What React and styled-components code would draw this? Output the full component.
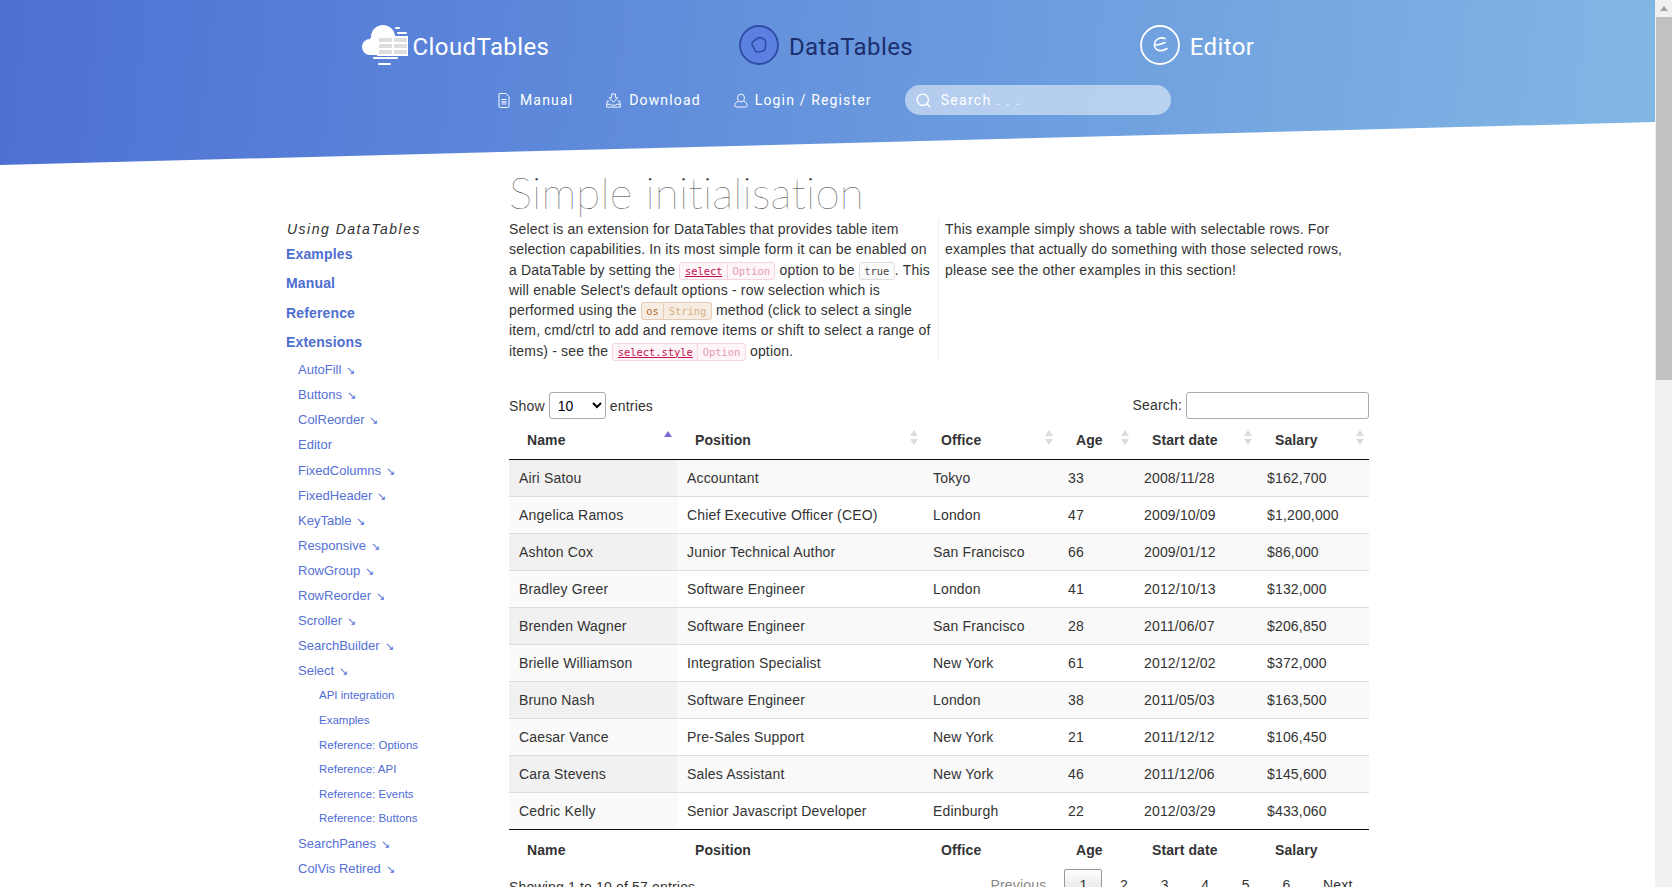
import React from "react";
import styled, { createGlobalStyle } from "styled-components";
import { Search } from "lucide-react";

const GlobalStyle = createGlobalStyle`
  html, body {
    margin: 0;
    height: 100%;
    overflow: hidden;
    background: #fff;
  }
  body {
    font-family: "Liberation Sans", Arial, sans-serif;
    font-size: 14px;
    color: #333;
  }
`;

const subItems = [
  { name: "AutoFill", arrow: true },
  { name: "Buttons", arrow: true },
  { name: "ColReorder", arrow: true },
  { name: "Editor" },
  { name: "FixedColumns", arrow: true },
  { name: "FixedHeader", arrow: true },
  { name: "KeyTable", arrow: true },
  { name: "Responsive", arrow: true },
  { name: "RowGroup", arrow: true },
  { name: "RowReorder", arrow: true },
  { name: "Scroller", arrow: true },
  { name: "SearchBuilder", arrow: true },
  { name: "Select", arrow: true },
];

const selectItems = [
  "API integration",
  "Examples",
  "Reference: Options",
  "Reference: API",
  "Reference: Events",
  "Reference: Buttons",
];

const columns = ["Name", "Position", "Office", "Age", "Start date", "Salary"];
const widths = [168, 246, 135, 76, 123, 112];

const rows = [
  ["Airi Satou", "Accountant", "Tokyo", "33", "2008/11/28", "$162,700"],
  ["Angelica Ramos", "Chief Executive Officer (CEO)", "London", "47", "2009/10/09", "$1,200,000"],
  ["Ashton Cox", "Junior Technical Author", "San Francisco", "66", "2009/01/12", "$86,000"],
  ["Bradley Greer", "Software Engineer", "London", "41", "2012/10/13", "$132,000"],
  ["Brenden Wagner", "Software Engineer", "San Francisco", "28", "2011/06/07", "$206,850"],
  ["Brielle Williamson", "Integration Specialist", "New York", "61", "2012/12/02", "$372,000"],
  ["Bruno Nash", "Software Engineer", "London", "38", "2011/05/03", "$163,500"],
  ["Caesar Vance", "Pre-Sales Support", "New York", "21", "2011/12/12", "$106,450"],
  ["Cara Stevens", "Sales Assistant", "New York", "46", "2011/12/06", "$145,600"],
  ["Cedric Kelly", "Senior Javascript Developer", "Edinburgh", "22", "2012/03/29", "$433,060"],
];

const tones = {
  pink: { bg: "#fdf5f8", line: "#f6d5e0", main: "#c4104f", sub: "#e79ab5" },
  brown: { bg: "#f6ece2", line: "#e3cdb6", main: "#b9691e", sub: "#d9ae84" },
  plain: { bg: "#fbfbfb", line: "#dedede", main: "#444", sub: "#999" },
};

const CloudLogo = () => (
  <svg width="47" height="44" viewBox="0 -1 47 44">
    <g fill="#fff">
      <circle cx="9" cy="23" r="8" />
      <circle cx="22" cy="13" r="12" />
      <rect x="9" y="14" width="20" height="17" />
      <rect x="16" y="12" width="31" height="20" />
      <rect x="34" y="3" width="5" height="2" rx="1" />
      <rect x="36" y="8" width="10" height="2" rx="1" />
      <rect x="12" y="33" width="25" height="2" rx="1" />
      <rect x="17" y="39" width="13" height="2" rx="1" />
    </g>
    <g fill="#dedede">
      <rect x="18" y="14" width="13" height="4" />
      <rect x="33" y="14" width="13" height="4" />
      <rect x="18" y="20" width="13" height="4" />
      <rect x="33" y="20" width="13" height="4" />
      <rect x="18" y="26" width="13" height="4" />
      <rect x="33" y="26" width="13" height="4" />
    </g>
  </svg>
);

const DataLogo = () => (
  <svg width="40" height="40" viewBox="0 0 40 40">
    <circle cx="20" cy="20" r="19" fill="#5b80e2" stroke="#2f4ba3" strokeWidth="1.8" />
    <path
      d="M13.5 17 L19 13 Q21 12.2 23 13 L26 15 Q27 16 26.8 18 L26 24 Q25.6 26 23.5 26.3 L18.5 27 Q16.5 27 16 25.4 L13.2 19.5 Q12.6 18 13.5 17 Z"
      fill="none"
      stroke="#2f4ba3"
      strokeWidth="1.6"
    />
  </svg>
);

const EditorLogo = () => (
  <svg width="40" height="40" viewBox="0 0 40 40" fill="none" stroke="#fff">
    <circle cx="20" cy="20" r="19" strokeWidth="1.8" />
    <path
      d="M25 13.5 C20 11.5 14 15 14.5 20.5 C15 25.5 21 27.5 27 23.5 M15 20.3 C18 20 21 19.3 25 17.5"
      strokeWidth="1.6"
      strokeLinecap="round"
    />
  </svg>
);

const ManualIcon = () => (
  <svg width="12" height="15" viewBox="0 0 12 15" fill="none" stroke="#fff" strokeWidth="1">
    <path d="M1.5 0.5 H8 L11 3.5 V13 Q11 14.5 9.5 14.5 H2.5 Q1 14.5 1 13 V1 Z" />
    <path d="M3.5 6.5 H8.5 M3.5 8.8 H8.5 M3.5 11 H8.5" strokeWidth="1.2" />
  </svg>
);

const DownloadIcon = () => (
  <svg width="15" height="15" viewBox="0 0 16 15" fill="none" stroke="#fff" strokeWidth="1">
    <path d="M6 0.5 H10 V4.5 H12.5 L8 9.5 L3.5 4.5 H6 Z" />
    <path d="M3.5 8 H1.5 L0.7 12 V14.5 H15.3 V12 L14.5 8 H12.5 M0.7 11.5 H5 L6 12.5 H10 L11 11.5 H15.3" />
  </svg>
);

const UserIcon = () => (
  <svg width="14" height="15" viewBox="0 0 15 15" fill="none" stroke="#fff" strokeWidth="1">
    <ellipse cx="7.5" cy="4.8" rx="3.8" ry="4.2" />
    <path d="M4.5 8.5 C2.5 9.2 0.8 10.5 0.8 12.5 Q0.8 14.5 2.8 14.5 H12.2 Q14.2 14.5 14.2 12.5 C14.2 10.5 12.5 9.2 10.5 8.5" />
  </svg>
);

const App = () => {
  return (
    <Wrapper>
      <GlobalStyle />
      <Page>
        <Header>
          <Brands>
            <Brand>
              <CloudLogo />
              <BrandName $gap="5px">CloudTables</BrandName>
            </Brand>
            <Brand>
              <DataLogo />
              <BrandName $dark>DataTables</BrandName>
            </Brand>
            <Brand>
              <EditorLogo />
              <BrandName>Editor</BrandName>
            </Brand>
          </Brands>
          <Nav>
            <NavLink $gap="10px">
              <ManualIcon />
              <span>Manual</span>
            </NavLink>
            <NavLink $gap="8px">
              <DownloadIcon />
              <span>Download</span>
            </NavLink>
            <NavLink $gap="7px">
              <UserIcon />
              <span>Login / Register</span>
            </NavLink>
            <SearchBox>
              <Search size={17} color="#fff" strokeWidth={2} />
              <SearchInput placeholder="Search . . ." />
            </SearchBox>
          </Nav>
        </Header>

        <Body>
          <Sidebar>
            <SideTitle>Using DataTables</SideTitle>
            <TopLink>Examples</TopLink>
            <TopLink>Manual</TopLink>
            <TopLink>Reference</TopLink>
            <TopLink>Extensions</TopLink>
            {subItems.map((item) => (
              <SubLink key={item.name}>
                {item.name}
                {item.arrow && <Arrow>↘</Arrow>}
              </SubLink>
            ))}
            {selectItems.map((item) => (
              <DeepLink key={item}>{item}</DeepLink>
            ))}
            <SubLink>
              SearchPanes<Arrow>↘</Arrow>
            </SubLink>
            <SubLink>
              ColVis Retired<Arrow>↘</Arrow>
            </SubLink>
          </Sidebar>

          <Main>
            <Title>Simple initialisation</Title>
            <Intro>
              <IntroLeft>
                Select is an extension for DataTables that provides table item
                selection capabilities. In its most simple form it can be enabled on
                a DataTable by setting the{" "}
                <Tag $tone="pink">
                  <TagMain $tone="pink" $link>select</TagMain>
                  <TagSub $tone="pink">Option</TagSub>
                </Tag>{" "}
                option to be{" "}
                <Tag $tone="plain">
                  <TagSub $tone="plain" $solo>true</TagSub>
                </Tag>
                . This will enable Select's default options - row selection which is
                performed using the{" "}
                <Tag $tone="brown">
                  <TagMain $tone="brown">os</TagMain>
                  <TagSub $tone="brown">String</TagSub>
                </Tag>{" "}
                method (click to select a single item, cmd/ctrl to add and remove
                items or shift to select a range of items) - see the{" "}
                <Tag $tone="pink">
                  <TagMain $tone="pink" $link>select.style</TagMain>
                  <TagSub $tone="pink">Option</TagSub>
                </Tag>{" "}
                option.
              </IntroLeft>
              <IntroRight>
                This example simply shows a table with selectable rows. For
                <br />
                examples that actually do something with those selected rows,
                <br />
                please see the other examples in this section!
              </IntroRight>
            </Intro>

            <Controls>
              <label>
                Show{" "}
                <LengthSelect defaultValue="10">
                  <option>10</option>
                  <option>25</option>
                  <option>50</option>
                  <option>100</option>
                </LengthSelect>{" "}
                entries
              </label>
              <label>
                Search: <FilterInput />
              </label>
            </Controls>

            <Table>
              <colgroup>
                {widths.map((w, i) => (
                  <col key={i} style={{ width: w }} />
                ))}
              </colgroup>
              <thead>
                <tr>
                  {columns.map((c, i) => (
                    <HeadCell key={c}>
                      {c}
                      {i === 0 ? <SortUp $active /> : <><SortUp /><SortDown /></>}
                    </HeadCell>
                  ))}
                </tr>
              </thead>
              <tbody>
                {rows.map((row) => (
                  <Row key={row[0]}>
                    {row.map((cell, i) => (
                      <Cell key={i} $sorted={i === 0}>
                        {cell}
                      </Cell>
                    ))}
                  </Row>
                ))}
              </tbody>
              <tfoot>
                <tr>
                  {columns.map((c) => (
                    <FootCell key={c}>{c}</FootCell>
                  ))}
                </tr>
              </tfoot>
            </Table>

            <TableFooter>
              <Info>Showing 1 to 10 of 57 entries</Info>
              <Pagination>
                <PageButton $disabled>Previous</PageButton>
                <PageButton $current>1</PageButton>
                <PageButton>2</PageButton>
                <PageButton>3</PageButton>
                <PageButton>4</PageButton>
                <PageButton>5</PageButton>
                <PageButton>6</PageButton>
                <PageButton>Next</PageButton>
              </Pagination>
            </TableFooter>
          </Main>
        </Body>
      </Page>

      <Scrollbar>
        <ScrollUp />
        <ScrollThumb />
      </Scrollbar>
    </Wrapper>
  );
};

const Wrapper = styled.div`
  display: flex;
  width: 1672px;
  height: 887px;
  overflow: hidden;
`;

const Page = styled.div`
  width: 1655px;
  flex: none;
`;

const Header = styled.header`
  height: 165px;
  box-sizing: border-box;
  padding: 25px 3px 0 0;
  background: linear-gradient(178.5deg, transparent 80%, rgba(50, 90, 150, 0.22) 92%),
    linear-gradient(96deg, #4e70d3 0%, #6391dc 45%, #82b7e4 100%);
  clip-path: polygon(0 0, 100% 0, 100% 122px, 0 165px);
  font-family: Roboto, sans-serif;
`;

const Brands = styled.div`
  display: grid;
  grid-template-columns: repeat(3, 371px);
  justify-content: center;
`;

const Brand = styled.div`
  display: flex;
  align-items: center;
  justify-content: center;
  height: 40px;
`;

const BrandName = styled.span`
  margin-left: ${(p) => p.$gap || "10px"};
  padding-top: 4px;
  font-size: 24px;
  letter-spacing: 0.4px;
  color: ${(p) => (p.$dark ? "#1c2f6e" : "#fff")};
`;

const Nav = styled.nav`
  display: flex;
  align-items: center;
  margin: 20px 0 0 498px;
`;

const NavLink = styled.a`
  display: flex;
  align-items: center;
  gap: ${(p) => p.$gap};
  margin-right: 33px;
  color: #fff;
  font-size: 14px;
  letter-spacing: 1.15px;
`;

const SearchBox = styled.div`
  display: flex;
  align-items: center;
  gap: 9px;
  width: 266px;
  height: 30px;
  box-sizing: border-box;
  padding-left: 10px;
  border-radius: 15px;
  background: rgba(255, 255, 255, 0.5);
`;

const SearchInput = styled.input`
  flex: 1;
  min-width: 0;
  padding: 0;
  border: 0;
  outline: 0;
  background: transparent;
  color: #fff;
  font-family: Roboto, sans-serif;
  font-size: 14px;
  letter-spacing: 1.3px;
  &::placeholder {
    color: #fff;
    opacity: 1;
  }
`;

const Body = styled.div`
  display: flex;
  padding-left: 286px;
`;

const Sidebar = styled.aside`
  width: 223px;
  flex: none;
  padding-top: 55px;
`;

const SideTitle = styled.div`
  margin-bottom: 2px;
  padding-left: 1px;
  font-style: italic;
  letter-spacing: 1.5px;
  line-height: 18px;
  color: #333;
`;

const TopLink = styled.a`
  display: block;
  height: 29.3px;
  line-height: 29.3px;
  font-weight: bold;
  letter-spacing: 0.15px;
  color: #4e6ed0;
`;

const SubLink = styled.a`
  display: block;
  height: 25.1px;
  line-height: 25.1px;
  padding-left: 12px;
  font-size: 13px;
  color: #5570d6;
`;

const DeepLink = styled.a`
  display: block;
  height: 24.6px;
  line-height: 24.6px;
  padding-left: 33px;
  font-size: 11.5px;
  color: #4f6cd6;
`;

const Arrow = styled.span`
  margin-left: 5px;
  font-size: 11px;
`;

const Main = styled.main`
  width: 860px;
  flex: none;
  letter-spacing: 0.17px;
`;

const Title = styled.h1`
  margin: 0;
  height: 54px;
  line-height: 54px;
  font-family: Lato, sans-serif;
  font-weight: 100;
  font-size: 44px;
  letter-spacing: 0.2px;
  color: #333;
`;

const Intro = styled.div`
  display: grid;
  grid-template-columns: 430px 430px;
  line-height: 20.3px;
`;

const IntroLeft = styled.p`
  margin: 0;
  padding-right: 5px;
  border-right: 1px solid #eee;
`;

const IntroRight = styled.p`
  margin: 0;
  padding-left: 6px;
`;

const Tag = styled.code`
  padding: 2px 0;
  border: 1px solid ${(p) => tones[p.$tone].line};
  border-radius: 3px;
  background: ${(p) => tones[p.$tone].bg};
  font-family: "DejaVu Sans Mono", monospace;
  font-size: 10.4px;
  line-height: 1;
  letter-spacing: 0;
`;

const TagMain = styled.span`
  padding: 2px 4.5px;
  border-right: 1px solid ${(p) => tones[p.$tone].line};
  color: ${(p) => tones[p.$tone].main};
  text-decoration: ${(p) => (p.$link ? "underline" : "none")};
`;

const TagSub = styled.span`
  padding: 2px 4.5px;
  color: ${(p) => (p.$solo ? tones[p.$tone].main : tones[p.$tone].sub)};
`;

const Controls = styled.div`
  display: flex;
  align-items: center;
  justify-content: space-between;
  height: 27px;
  margin-top: 31px;
`;

const LengthSelect = styled.select`
  width: 57px;
  height: 27px;
  padding: 0 4px;
  border: 1px solid #aaa;
  border-radius: 3px;
  background: #fff;
  font-family: "Liberation Sans", Arial, sans-serif;
  font-size: 14px;
  color: #000;
`;

const FilterInput = styled.input`
  width: 183px;
  height: 27px;
  box-sizing: border-box;
  border: 1px solid #aaa;
  border-radius: 3px;
`;

const Table = styled.table`
  width: 860px;
  margin-top: 3px;
  table-layout: fixed;
  border-collapse: separate;
  border-spacing: 0;
`;

const HeadCell = styled.th`
  position: relative;
  height: 38px;
  box-sizing: border-box;
  padding: 0 18px 1px;
  border-bottom: 1px solid #111;
  text-align: left;
  font-weight: bold;
  line-height: 18px;
  letter-spacing: 0.1px;
`;

const SortUp = styled.span`
  position: absolute;
  right: 5px;
  top: ${(p) => (p.$active ? "9px" : "8px")};
  border-left: 4px solid transparent;
  border-right: 4px solid transparent;
  border-bottom: 6px solid ${(p) => (p.$active ? "#7b6cd8" : "#dcdcdc")};
`;

const SortDown = styled.span`
  position: absolute;
  right: 5px;
  top: 17px;
  border-left: 4px solid transparent;
  border-right: 4px solid transparent;
  border-top: 6px solid #dcdcdc;
`;

const Cell = styled.td`
  height: 37px;
  box-sizing: border-box;
  padding: 0 10px;
  border-bottom: 1px solid #ddd;
  white-space: nowrap;
`;

const Row = styled.tr`
  &:nth-child(odd) ${Cell} {
    background: #f9f9f9;
  }
  &:nth-child(odd) ${Cell}:first-child {
    background: #f1f1f1;
  }
  &:nth-child(even) ${Cell}:first-child {
    background: #fafafa;
  }
  &:last-child ${Cell} {
    border-bottom: 0;
    height: 36px;
  }
`;

const FootCell = styled.th`
  height: 40px;
  box-sizing: border-box;
  padding: 0 18px;
  border-top: 1px solid #111;
  text-align: left;
  font-weight: bold;
  letter-spacing: 0.1px;
`;

const TableFooter = styled.div`
  display: flex;
  justify-content: space-between;
`;

const Info = styled.div`
  padding-top: 8px;
  line-height: 20px;
`;

const Pagination = styled.div`
  display: flex;
  margin-right: 1.5px;
`;

const PageButton = styled.a`
  box-sizing: border-box;
  min-width: 38px;
  height: 32px;
  margin-left: 2.6px;
  margin-right: ${(p) => (p.$disabled ? "0.5px" : "0")};
  padding: 7px 14px;
  border: 1px solid ${(p) => (p.$current ? "#979797" : "transparent")};
  border-radius: 2px;
  background: ${(p) => (p.$current ? "linear-gradient(#fff, #dcdcdc)" : "none")};
  color: ${(p) => (p.$disabled ? "#888" : "#333")};
  line-height: 17px;
  text-align: center;
`;

const Scrollbar = styled.div`
  width: 17px;
  height: 887px;
  flex: none;
  display: flex;
  flex-direction: column;
  background: #f1f1f1;
`;

const ScrollUp = styled.div`
  height: 17px;
  box-sizing: border-box;
  padding-top: 6px;
  &::before {
    content: "";
    display: block;
    width: 0;
    margin: 0 auto;
    border-left: 4px solid transparent;
    border-right: 4px solid transparent;
    border-bottom: 5px solid #a3a3a3;
  }
`;

const ScrollThumb = styled.div`
  height: 363px;
  margin-left: 1px;
  background: #c1c1c1;
`;

export default App;
